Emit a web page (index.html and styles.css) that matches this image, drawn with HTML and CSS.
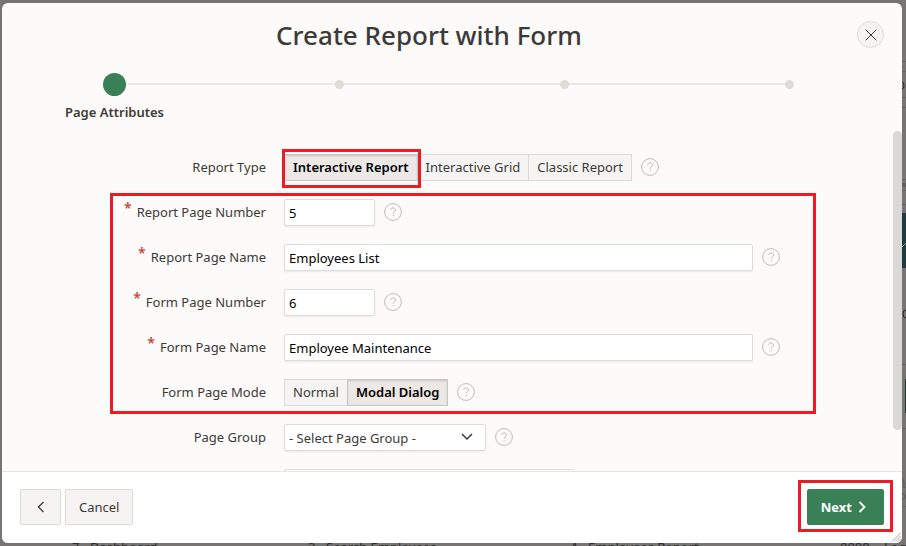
FILE: index.html
```html
<!DOCTYPE html>
<html lang="en">
<head>
<meta charset="utf-8">
<title>Create Report with Form</title>
<link rel="stylesheet" href="styles.css">
</head>
<body>
<svg class="defs" aria-hidden="true">
  <symbol id="help" viewBox="0 0 18 18"><circle cx="9" cy="9" r="8.4"/><path d="M6.600 6.900C6.800 5.600 7.800 4.900 9 4.900c1.400 0 2.500.800 2.500 2.100C11.500 8.800 9.200 8.800 9.200 10.800M9.200 12v1.300"/></symbol>
</svg>
<div class="backdrop" aria-hidden="true">
  <svg class="edge" viewBox="0 0 4 546">
    <path class="edge-line" d="M0 61.500h4M0 71.500h4M0 97.500h4M0 107.500h4M0 179.500h4M0 190.500h4M0 204.500h4M0 364.500h4M0 428.500h4M0 487.500h4M0 506.500h4"/>
    <path class="edge-bar" d="M0 185h4"/>
    <path class="edge-teal" d="M0 213h4v55H0z"/>
    <path class="edge-green" d="M3 379h1v34H3z"/>
    <path class="edge-pencil" d="M0 247l4-4"/>
    <path class="edge-mark" d="M0 82q2 0 2 3.500T0 89M4 310q-3 0-3 4t3 4"/>
    <path class="edge-faint" d="M0 479q2 0 2 4v4M0 494h1q2 0 2 2.500T1 499H0"/>
  </svg>
  <div class="backdrop-row">
    <span><b>7</b>Dashboard</span><span><b>3</b>Search Employees</span><span><b>4</b>Employees Report</span><span><b class="code">0000</b>Login</span>
  </div>
</div>
<div class="dialog" role="dialog" aria-labelledby="title">
  <header class="header">
    <h1 id="title">Create Report with Form</h1>
    <button class="close" type="button" aria-label="Close"><svg viewBox="0 0 12 12"><path d="M.7.7l10.6 10.6M11.3.7L.7 11.3"/></svg></button>
  </header>
  <ol class="steps">
    <li class="step current"><span class="dot"></span><span class="step-name">Page Attributes</span></li>
    <li class="step"><span class="dot"></span></li>
    <li class="step"><span class="dot"></span></li>
    <li class="step"><span class="dot"></span></li>
  </ol>
  <main class="content">
    <form class="form" id="wizard">
      <div class="row">
        <span class="label">Report Type</span>
        <div class="field">
          <div class="pills">
            <span class="marked"><button class="pill on" type="button" aria-pressed="true">Interactive Report</button></span>
            <button class="pill" type="button">Interactive Grid</button>
            <button class="pill" type="button">Classic Report</button>
          </div>
          <button class="help" type="button" aria-label="Help"><svg><use href="#help"/></svg></button>
        </div>
      </div>
      <div class="group">
        <div class="row">
          <label class="label required" for="rnum">Report Page Number</label>
          <div class="field"><input class="input short" id="rnum" type="text" value="5"><button class="help" type="button" aria-label="Help"><svg><use href="#help"/></svg></button></div>
        </div>
        <div class="row">
          <label class="label required" for="rname">Report Page Name</label>
          <div class="field"><input class="input" id="rname" type="text" value="Employees List"><button class="help" type="button" aria-label="Help"><svg><use href="#help"/></svg></button></div>
        </div>
        <div class="row">
          <label class="label required" for="fnum">Form Page Number</label>
          <div class="field"><input class="input short" id="fnum" type="text" value="6"><button class="help" type="button" aria-label="Help"><svg><use href="#help"/></svg></button></div>
        </div>
        <div class="row">
          <label class="label required" for="fname">Form Page Name</label>
          <div class="field"><input class="input" id="fname" type="text" value="Employee Maintenance"><button class="help" type="button" aria-label="Help"><svg><use href="#help"/></svg></button></div>
        </div>
        <div class="row">
          <span class="label">Form Page Mode</span>
          <div class="field">
            <div class="pills">
              <button class="pill" type="button">Normal</button>
              <button class="pill on" type="button" aria-pressed="true">Modal Dialog</button>
            </div>
            <button class="help" type="button" aria-label="Help"><svg><use href="#help"/></svg></button>
          </div>
        </div>
      </div>
      <div class="row">
        <label class="label" for="pgroup">Page Group</label>
        <div class="field">
          <span class="select-wrap">
            <select class="input select" id="pgroup"><option>- Select Page Group -</option></select>
            <svg class="chevron" viewBox="0 0 12 8"><path d="M1 1l5 5 5-5"/></svg>
          </span>
          <button class="help" type="button" aria-label="Help"><svg><use href="#help"/></svg></button>
        </div>
      </div>
      <div class="row">
        <span class="label"></span>
        <div class="field"><input class="input medium" type="text" aria-label="Page option"></div>
      </div>
    </form>
    <div class="thumb"></div>
  </main>
  <footer class="footer">
    <button class="btn back" type="button" aria-label="Back"><svg viewBox="0 0 8 12"><path d="M6.500 1L1.500 6l5 5"/></svg></button>
    <button class="btn" type="button">Cancel</button>
    <span class="marked marked-next"><button class="btn next" type="submit" form="wizard">Next<svg viewBox="0 0 8 12"><path d="M1.500 1l5 5-5 5"/></svg></button></span>
    <svg class="grip" viewBox="0 0 10 10"><path d="M1 9.500L9.500 1M4 9.500L9.500 4M7 9.500L9.500 7"/></svg>
  </footer>
</div>
</body>
</html>
```
FILE: styles.css
```css
* { box-sizing: border-box; }

body {
  margin: 0;
  height: 100vh;
  padding: 3px 4px 3px 2px;
  overflow: hidden;
  background: #767573;
  color: #3c3a38;
  font: 13px/18px "Noto Sans", "Open Sans", sans-serif;
}

button, input, select { font: inherit; color: inherit; margin: 0; }
button { cursor: pointer; }
svg { fill: none; stroke: currentColor; display: block; }
.defs { position: absolute; width: 0; height: 0; }

.backdrop { position: absolute; inset: 0; overflow: hidden; color: #2c2b2a; }
.backdrop-row {
  position: absolute;
  inset: auto 0 -10px 72px;
  display: grid;
  grid-template-columns: 236px 262px 270px 1fr;
  white-space: nowrap;
}
.backdrop-row b { display: inline-block; width: 18px; font-weight: 400; }
.backdrop-row .code { width: 44px; }
.edge { position: absolute; top: 0; right: 0; width: 4px; height: 546px; }
.edge-line { stroke: #666563; }
.edge-bar { stroke: #62605c; stroke-width: 4; }
.edge-teal { fill: #203a3e; stroke: none; }
.edge-green { fill: #1d3a29; stroke: none; }
.edge-pencil { stroke: #8f9a9b; }
.edge-mark { stroke: #242424; }
.edge-faint { stroke: #555451; }

.dialog {
  position: relative;
  display: flex;
  flex-direction: column;
  height: 100%;
  border-radius: 6px;
  overflow: hidden;
  background: #fcfbf9;
}

.header { position: relative; padding: 12px 92px 12px 46px; text-align: center; }
h1 { margin: 0; font-size: 26px; line-height: 40px; font-weight: 500; }
.close {
  position: absolute;
  top: 18px;
  right: 18px;
  display: grid;
  place-items: center;
  width: 27px;
  height: 27px;
  padding: 0;
  border: 1px solid #dddbd8;
  border-radius: 50%;
  background: #f5f4f2;
}
.close svg { width: 12px; height: 12px; }

.steps { display: flex; height: 64px; margin: 0; padding: 0; list-style: none; }
.step { position: relative; flex: 1; display: flex; flex-direction: column; align-items: center; padding-top: 6px; }
.step + .step::before {
  content: "";
  position: absolute;
  top: 16px;
  right: 50%;
  width: 100%;
  height: 2px;
  background: #e9e8e5;
}
.dot { position: relative; z-index: 1; width: 9px; height: 9px; margin: 7px 0; border-radius: 50%; background: #dedcd7; }
.current .dot { width: 23px; height: 23px; margin: 0; background: #398057; z-index: 2; }
.step-name { margin-top: 7px; font-weight: 600; }

.content { position: relative; flex: 1; min-height: 0; overflow: hidden; }
.form { display: flex; flex-direction: column; gap: 18px; padding: 23px 122px 0 0; }
.group { position: relative; display: flex; flex-direction: column; gap: 18px; }
.group::after {
  content: "";
  position: absolute;
  inset: -6px -36px -8px 108px;
  border: 3px solid #ed1c24;
  pointer-events: none;
}
.row { display: grid; grid-template-columns: 264px 1fr; gap: 18px; align-items: start; height: 27px; }
.label { padding: 4px 0; text-align: right; }
.required::before {
  content: "*";
  margin-right: 5px;
  color: #c74634;
  font-size: 14px;
  font-weight: 600;
  line-height: 10px;
  vertical-align: 4px;
}
.field { display: flex; align-items: start; gap: 9px; }
.input {
  flex: 1;
  min-width: 0;
  height: 27px;
  padding: 0 4px;
  border: 1px solid #dfdddb;
  border-radius: 2px;
  background: #fff;
  color: #000;
  box-shadow: 0 1px 2px #00000014;
}
.short { flex: 0 0 91px; }
.medium { flex: 0 0 290px; }
.select-wrap { position: relative; display: flex; width: 202px; }
.select { appearance: none; color: #3c3a38; }
.chevron { position: absolute; right: 13px; top: 9px; width: 12px; height: 8px; stroke-width: 1.5; pointer-events: none; }

.help { flex: none; width: 18px; height: 18px; margin-top: 4px; padding: 0; border: 0; background: none; color: #bebbb8; }
.help svg { width: 18px; height: 18px; }

.pills { display: flex; }
.pill { height: 27px; padding: 0 8px 1px; border: 1px solid #dcdad8; margin-left: -1px; background: #f5f4f2; white-space: nowrap; }
.pills > :first-child { margin-left: 0; }
.pill.on { background: #ebe8e5; border-color: #c9c6c3; box-shadow: inset 0 1px 2px #00000026; color: #000; font-weight: 600; }
.marked { position: relative; display: block; }
.marked .pill { margin: 0; }
.marked::after {
  content: "";
  position: absolute;
  z-index: 1;
  inset: -5px -3px -7px -2px;
  border: 3px solid #ed1c24;
  pointer-events: none;
}
.marked-next { margin-left: auto; }
.marked-next::after { inset: -9px -9px -7px -9px; }

.thumb { position: absolute; top: 0; right: 0; width: 9px; height: 88%; border-radius: 5px; background: #dad9d7; }

.footer { position: relative; display: flex; gap: 4px; align-items: start; padding: 17px 18px 18px; border-top: 1px solid #e6e5e3; background: #fff; }
.btn { height: 36px; padding: 0 13px; border: 1px solid #dddbd8; border-radius: 2px; background: #f5f4f2; }
.btn svg { width: 8px; height: 12px; stroke-width: 1.3; }
.back { width: 41px; padding: 0 16px; }
.next { display: flex; align-items: center; gap: 6px; padding: 0 17px 0 13px; border-color: #398057; background: #398057; color: #fff; font-weight: 700; }
.next svg { stroke-width: 1.8; }
.grip { position: absolute; right: 1px; bottom: 1px; width: 10px; height: 10px; color: #aaa; }
```
